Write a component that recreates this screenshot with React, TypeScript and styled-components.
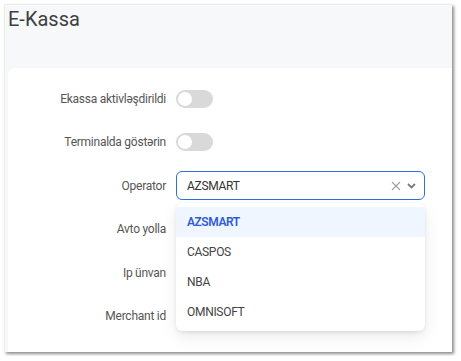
import React from "react";
import styled, { createGlobalStyle } from "styled-components";

const Global = createGlobalStyle`
  html, body { margin: 0; padding: 0; background: #ffffff; }
  body { font-family: Roboto, "Liberation Sans", sans-serif; }
  * { box-sizing: border-box; }
`;

const Frame = styled.div`
  width: 448px;
  height: 348px;
  margin: 4px;
  background: #f7f8fa;
  border-left: 1px solid #ececec;
  border-top: 1px solid #ececec;
  box-shadow: 2px 2px 3px rgba(0, 0, 0, 0.45);
  display: flex;
  flex-direction: column;
`;

const Header = styled.div`
  height: 63px;
  padding: 2px 0 0 3px;
`;

const Title = styled.h1`
  margin: 0;
  font-size: 20px;
  font-weight: 400;
  line-height: 24px;
  color: #3f3f3f;
`;

const Card = styled.div`
  flex: 1;
  margin-left: 3px;
  background: #ffffff;
  border-radius: 6px 0 0 0;
  box-shadow: 0 0 2px rgba(0, 0, 0, 0.04);
  padding-top: 16px;
`;

const Form = styled.div`
  display: grid;
  grid-template-columns: 158px 249px;
  grid-auto-rows: 29px;
  column-gap: 10px;
  row-gap: 14.6px;
`;

const Label = styled.div`
  align-self: center;
  text-align: right;
  font-size: 12px;
  letter-spacing: -0.25px;
  color: #555555;
  white-space: nowrap;
`;

const Cell = styled.div`
  position: relative;
  display: flex;
  align-items: center;
`;

const Toggle = styled.div`
  width: 37px;
  height: 18px;
  border-radius: 9px;
  background: #d9d9d9;
  position: relative;
  &::after {
    content: "";
    position: absolute;
    left: 2px;
    top: 2px;
    width: 14px;
    height: 14px;
    border-radius: 50%;
    background: #ffffff;
  }
`;

const SelectBox = styled.div`
  width: 249px;
  height: 29px;
  border: 1px solid #2a72d8;
  border-radius: 6px;
  display: flex;
  align-items: center;
  padding: 0 8px 0 10px;
  font-size: 12px;
  letter-spacing: -0.3px;
  color: #333333;
`;

const SelectValue = styled.span`
  flex: 1;
`;

const IconRow = styled.span`
  display: flex;
  align-items: center;
  gap: 6px;
`;

const Input = styled.div`
  width: 249px;
  height: 28px;
  border: 1px solid #d9d9d9;
  border-radius: 6px;
  background: #ffffff;
`;

const Dropdown = styled.div`
  position: absolute;
  left: 0;
  top: 32px;
  width: 249px;
  background: #ffffff;
  border-radius: 6px;
  padding: 4px 0 4px;
  box-shadow: 0 3px 6px -4px rgba(0, 0, 0, 0.12), 0 6px 16px 0 rgba(0, 0, 0, 0.08),
    0 1px 4px 0 rgba(0, 0, 0, 0.06);
  z-index: 10;
`;

const Option = styled.div<{ $active?: boolean }>`
  height: 30px;
  display: flex;
  align-items: center;
  padding-left: 11px;
  font-size: 12px;
  letter-spacing: ${(p) => (p.$active ? "-0.45px" : "-0.3px")};
  color: ${(p) => (p.$active ? "#2f5bd8" : "#444444")};
  font-weight: ${(p) => (p.$active ? 600 : 400)};
  background: ${(p) => (p.$active ? "#f0f6ff" : "transparent")};
`;

const CloseIcon = () => (
  <svg width="10" height="10" viewBox="0 0 10 10">
    <path d="M1 1 L9 9 M9 1 L1 9" stroke="#a0a0a0" strokeWidth="1.1" fill="none" />
  </svg>
);

const ChevronIcon = () => (
  <svg width="9" height="6" viewBox="0 0 9 6">
    <path d="M1 1 L4.5 4.5 L8 1" stroke="#7a7a7a" strokeWidth="1.8" fill="none" />
  </svg>
);

const options = ["AZSMART", "CASPOS", "NBA", "OMNISOFT"];

export default function App() {
  return (
    <>
      <Global />
      <Frame>
        <Header>
          <Title>E-Kassa</Title>
        </Header>
        <Card>
          <Form>
            <Label>Ekassa aktivləşdirildi</Label>
            <Cell>
              <Toggle />
            </Cell>
            <Label>Terminalda göstərin</Label>
            <Cell>
              <Toggle />
            </Cell>
            <Label>Operator</Label>
            <Cell>
              <SelectBox>
                <SelectValue>AZSMART</SelectValue>
                <IconRow>
                  <CloseIcon />
                  <ChevronIcon />
                </IconRow>
              </SelectBox>
              <Dropdown>
                {options.map((o, i) => (
                  <Option key={o} $active={i === 0}>
                    {o}
                  </Option>
                ))}
              </Dropdown>
            </Cell>
            <Label>Avto yolla</Label>
            <Cell>
              <Toggle />
            </Cell>
            <Label>Ip ünvan</Label>
            <Cell>
              <Input />
            </Cell>
            <Label>Merchant id</Label>
            <Cell>
              <Input />
            </Cell>
          </Form>
        </Card>
      </Frame>
    </>
  );
}
